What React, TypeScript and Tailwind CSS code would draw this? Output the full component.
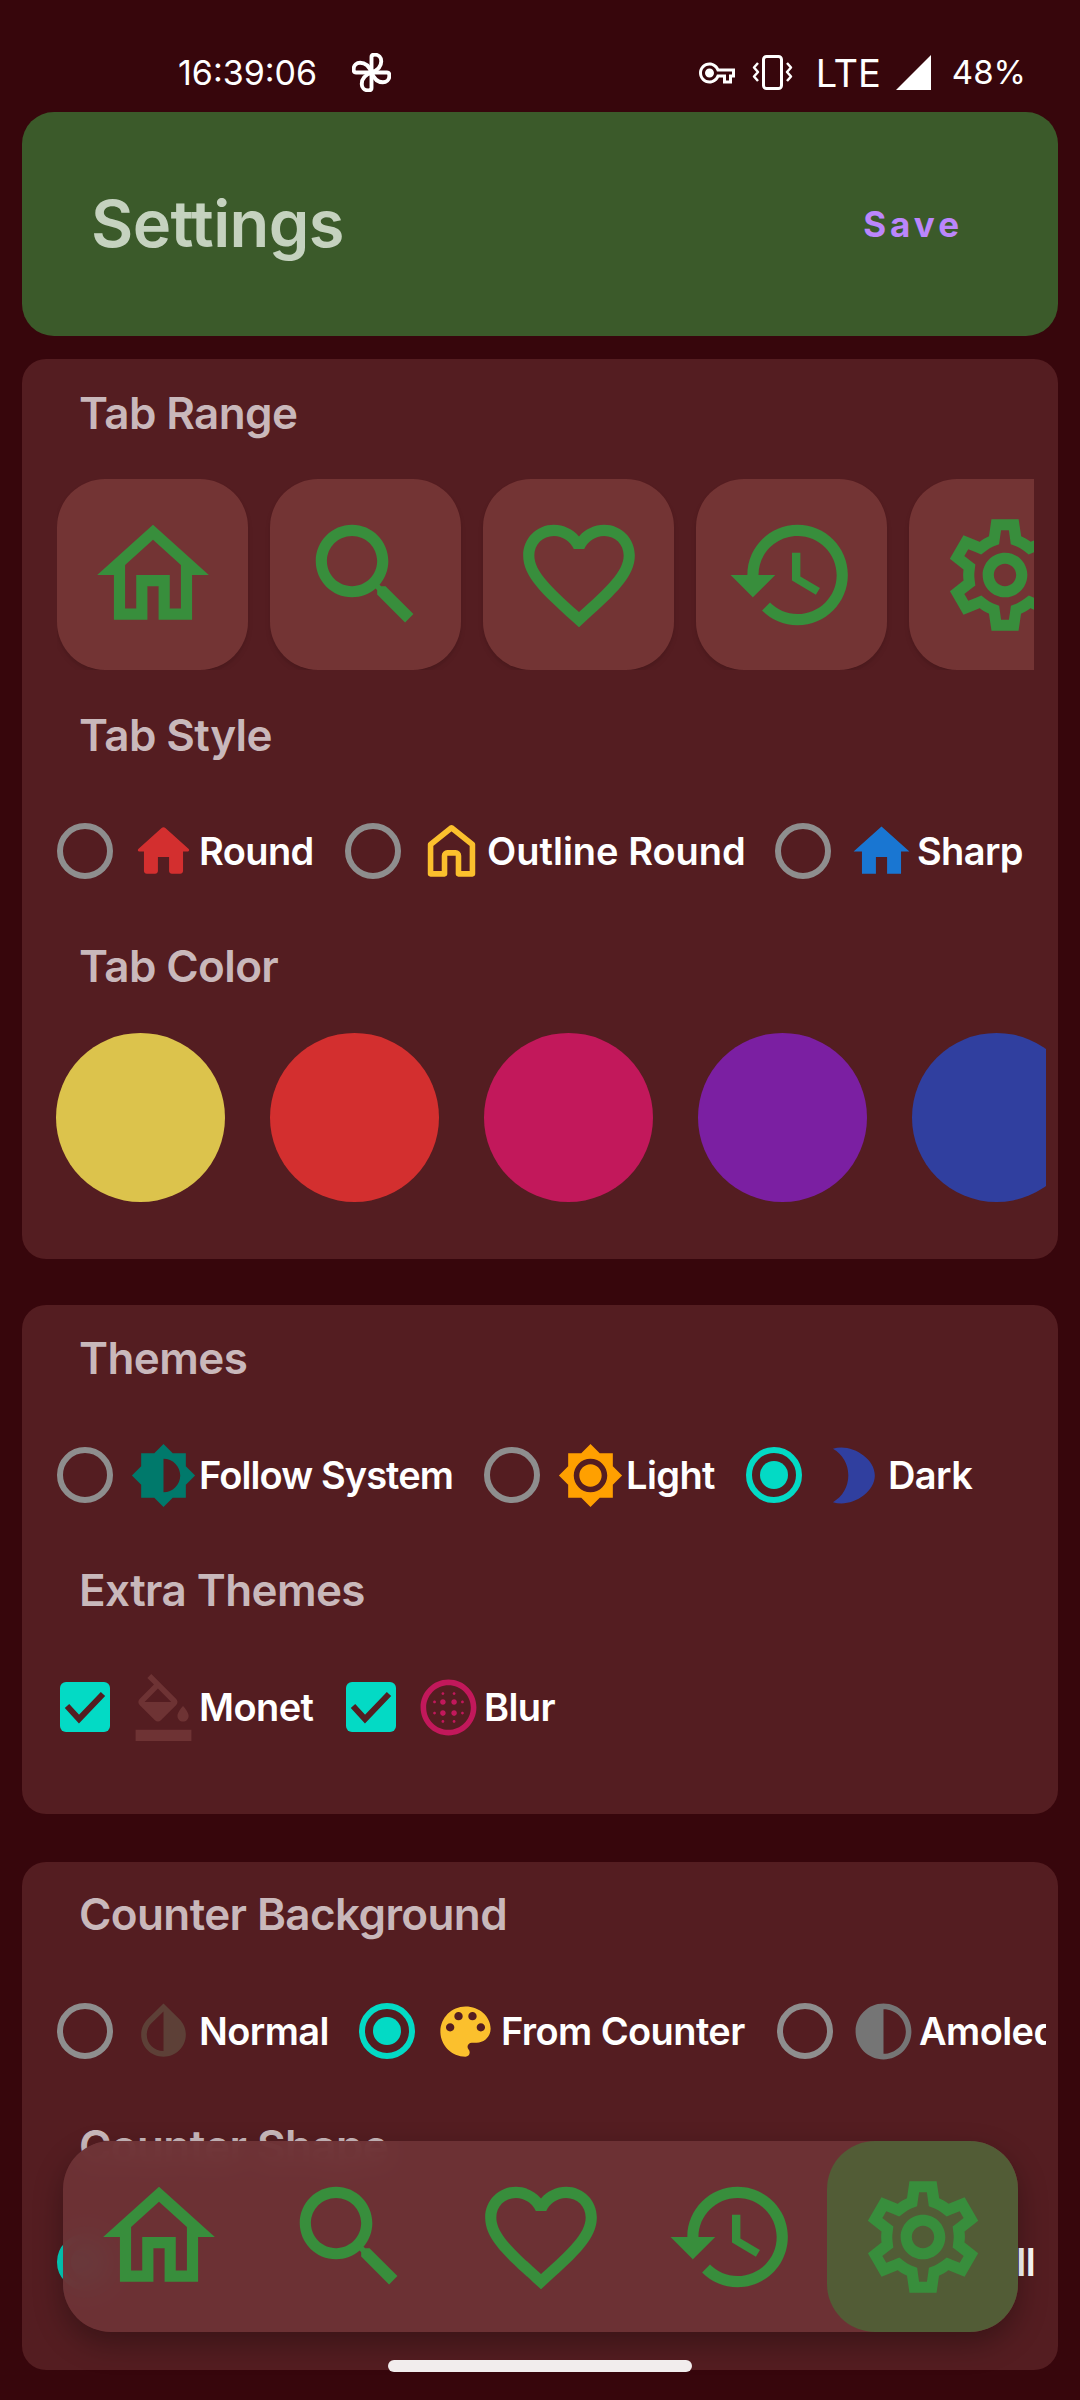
import React from 'react';

const ICONS = {
  home: 'M12 5.69l5 4.5V18h-2v-6H9v6H7v-7.81l5-4.5M12 3L2 12h3v8h6v-6h2v6h6v-8h3L12 3z',
  search:
    'M15.5 14h-.79l-.28-.27C15.41 12.59 16 11.11 16 9.5 16 5.91 13.09 3 9.5 3S3 5.91 3 9.5 5.91 16 9.5 16c1.61 0 3.09-.59 4.23-1.57l.27.28v.79l5 4.99L20.49 19l-4.99-5zm-6 0C7.01 14 5 11.99 5 9.5S7.01 5 9.5 5 14 7.01 14 9.5 11.99 14 9.5 14z',
  heart:
    'M16.5 3c-1.74 0-3.41.81-4.5 2.09C10.91 3.81 9.24 3 7.5 3 4.42 3 2 5.42 2 8.5c0 3.78 3.4 6.86 8.55 11.54L12 21.35l1.45-1.32C18.6 15.36 22 12.28 22 8.5 22 5.42 19.58 3 16.5 3zm-4.4 15.55l-.1.1-.1-.1C7.14 14.24 4 11.39 4 8.5 4 6.5 5.5 5 7.5 5c1.54 0 3.04.99 3.57 2.36h1.87C13.46 5.99 14.96 5 16.5 5c2 0 3.5 1.5 3.5 3.5 0 2.89-3.14 5.74-7.9 10.05z',
  history:
    'M13 3c-4.97 0-9 4.03-9 9H1l3.89 3.89.07.14L9 12H6c0-3.87 3.13-7 7-7s7 3.13 7 7-3.13 7-7 7c-1.93 0-3.68-.79-4.94-2.06l-1.42 1.42C8.27 19.99 10.51 21 13 21c4.97 0 9-4.03 9-9s-4.03-9-9-9zm-1 5v5l4.28 2.54.72-1.21-3.5-2.08V8H12z',
  gear:
    'M19.44 12.99l-.01.02c.04-.33.08-.67.08-1.01 0-.34-.03-.66-.07-.99l.01.02 2.44-1.92-2.43-4.22-2.87 1.16.01.01c-.52-.4-1.09-.74-1.71-1h.01L14.44 2H9.57l-.44 3.07h.01c-.62.26-1.19.6-1.71 1l.01-.01-2.88-1.17-2.44 4.22 2.44 1.92.01-.02c-.04.33-.07.65-.07.99 0 .34.03.68.08 1.01l-.01-.02-2.43 1.91 2.43 4.2 2.88-1.15-.02-.04c.53.41 1.1.75 1.73 1.01h-.03L9.58 22h4.85l.44-3.07h-.01c.62-.26 1.2-.6 1.73-1.01l-.02.04 2.88 1.15 2.43-4.2-2.44-1.92zM17.45 11.27c.04.31.05.52.05.73 0 .21-.02.43-.05.73l-.14 1.13.89.7 1.08.84-.7 1.21-1.27-.51-1.04-.42-.9.68c-.43.32-.84.56-1.25.73l-1.06.43-.16 1.13-.2 1.35h-1.4l-.19-1.35-.16-1.13-1.06-.43c-.43-.18-.83-.41-1.23-.71l-.91-.7-1.06.43-1.27.51-.7-1.21 1.08-.84.89-.7-.14-1.13c-.03-.31-.05-.54-.05-.74s.02-.43.05-.73l.14-1.13-.89-.7-1.08-.84.7-1.21 1.27.51 1.04.42.9-.68c.43-.32.84-.56 1.25-.73l1.06-.43.16-1.13.2-1.35h1.39l.19 1.35.16 1.13 1.06.43c.43.18.83.41 1.23.71l.91.7 1.06-.43 1.27-.51.7 1.21-1.07.85-.89.7.14 1.13zM12 8c-2.21 0-4 1.79-4 4s1.79 4 4 4 4-1.79 4-4-1.79-4-4-4zm0 6c-1.1 0-2-.9-2-2s.9-2 2-2 2 .9 2 2-.9 2-2 2z',
  homeRound:
    'M10 19v-5h4v5c0 .55.45 1 1 1h3c.55 0 1-.45 1-1v-7h1.7c.46 0 .68-.57.33-.87L12.67 3.6c-.38-.34-.96-.34-1.34 0l-8.36 7.53c-.34.3-.13.87.33.87H5v7c0 .55.45 1 1 1h3c.55 0 1-.45 1-1z',
  homeSharp: 'M10 20v-6h4v6h5v-8h3L12 3 2 12h3v8z',
  system:
    'M20 15.31L23.31 12 20 8.69V4h-4.69L12 .69 8.69 4H4v4.69L.69 12 4 15.31V20h4.69L12 23.31 15.31 20H20v-4.69zM12 18V6c3.31 0 6 2.69 6 6s-2.69 6-6 6z',
  light:
    'M20 8.69V4h-4.69L12 .69 8.69 4H4v4.69L.69 12 4 15.31V20h4.69L12 23.31 15.31 20H20v-4.69L23.31 12 20 8.69zM12 18c-3.31 0-6-2.69-6-6s2.69-6 6-6 6 2.69 6 6-2.69 6-6 6zm0-10c-2.21 0-4 1.79-4 4s1.79 4 4 4 4-1.79 4-4-1.79-4-4-4z',
  moon: 'M8 2c-1.05 0-2.05.16-3 .46C8.500 4.500 10.500 8 10.500 12c0 4-2 7.500-5.500 9.540.95.3 1.95.46 3 .46 5.520 0 12-4.480 12-10S13.520 2 8 2z',
  monet:
    'M16.56 8.94L7.62 0 6.21 1.41l2.38 2.38-5.15 5.15c-.59.59-.59 1.54 0 2.12l5.5 5.5c.29.29.68.44 1.06.44s.77-.15 1.06-.44l5.5-5.5c.59-.58.59-1.53 0-2.12zM5.21 10L10 5.21 14.79 10H5.21zM19 11.5s-2 2.17-2 3.5c0 1.1.9 2 2 2s2-.9 2-2c0-1.33-2-3.5-2-3.5zM2 20h20v4H2v-4z',
  blur:
    'M10 9c-.55 0-1 .45-1 1s.45 1 1 1 1-.45 1-1-.45-1-1-1zm0 4c-.55 0-1 .45-1 1s.45 1 1 1 1-.45 1-1-.45-1-1-1zM7 9.5c-.28 0-.5.22-.5.5s.22.5.5.5.5-.22.5-.5-.22-.5-.5-.5zm3 7c-.28 0-.5.22-.5.5s.22.5.5.5.5-.22.5-.5-.22-.5-.5-.5zm-3-3c-.28 0-.5.22-.5.5s.22.5.5.5.5-.22.5-.5-.22-.5-.5-.5zm3-6c.28 0 .5-.22.5-.5s-.22-.5-.5-.5-.5.22-.5.5.22.5.5.5zM14 9c-.55 0-1 .45-1 1s.45 1 1 1 1-.45 1-1-.45-1-1-1zm0-1.5c.28 0 .5-.22.5-.5s-.22-.5-.5-.5-.5.22-.5.5.22.5.5.5zm3 6c-.28 0-.5.22-.5.5s.22.5.5.5.5-.22.5-.5-.22-.5-.5-.5zm0-4c-.28 0-.5.22-.5.5s.22.5.5.5.5-.22.5-.5-.22-.5-.5-.5zM12 2C6.48 2 2 6.48 2 12s4.48 10 10 10 10-4.48 10-10S17.52 2 12 2zm0 18c-4.42 0-8-3.58-8-8s3.58-8 8-8 8 3.58 8 8-3.58 8-8 8zm2-3.5c-.28 0-.5.22-.5.5s.22.5.5.5.5-.22.5-.5-.22-.5-.5-.5zm0-3.5c-.55 0-1 .45-1 1s.45 1 1 1 1-.45 1-1-.45-1-1-1z',
  invert:
    'M12 4.81V19c-3.31 0-6-2.63-6-5.87 0-1.56.62-3.03 1.75-4.14L12 4.81M6.35 7.56C4.9 8.99 4 10.96 4 13.13 4 17.48 7.58 21 12 21s8-3.52 8-7.87c0-2.17-.9-4.14-2.35-5.57L12 2 6.35 7.56z',
  palette:
    'M12 3c-4.97 0-9 4.03-9 9s4.03 9 9 9c.83 0 1.5-.67 1.5-1.5 0-.39-.15-.74-.39-1.01-.23-.26-.38-.61-.38-.99 0-.83.67-1.5 1.5-1.5H16c2.76 0 5-2.24 5-5 0-4.42-4.03-8-9-8zm-5.5 9c-.83 0-1.5-.67-1.5-1.5S5.67 9 6.5 9 8 9.67 8 10.5 7.33 12 6.5 12zm3-4C8.67 8 8 7.33 8 6.5S8.67 5 9.5 5s1.5.67 1.5 1.5S10.33 8 9.5 8zm5 0c-.83 0-1.5-.67-1.5-1.5S13.67 5 14.5 5s1.5.67 1.5 1.5S15.33 8 14.5 8zm3 4c-.83 0-1.5-.67-1.5-1.5S16.67 9 17.5 9s1.5.67 1.5 1.5-.67 1.5-1.5 1.5z',
  contrast: 'M12 2C6.48 2 2 6.48 2 12s4.48 10 10 10 10-4.48 10-10S17.52 2 12 2zm0 18V4c4.41 0 8 3.59 8 8s-3.59 8-8 8z',
  key: 'M22 19h-6v-4h-2.68c-1.14 2.42-3.6 4-6.32 4-3.86 0-7-3.14-7-7s3.14-7 7-7c2.72 0 5.17 1.58 6.32 4H24v6h-2v4zm-4-2h2v-4h2v-2H11.94l-.23-.67C11.01 8.34 9.11 7 7 7c-2.76 0-5 2.24-5 5s2.24 5 5 5c2.11 0 4.01-1.34 4.71-3.33l.23-.67H18v4zM7 15c-1.65 0-3-1.35-3-3s1.35-3 3-3 3 1.35 3 3-1.35 3-3 3z',
};

const Icon = ({ d, className }: { d: string; className: string }) => (
  <svg viewBox="0 0 24 24" fill="currentColor" fillRule="evenodd" className={className}>
    <path d={d} />
  </svg>
);

const OutlineRoundHome = () => (
  <svg viewBox="0 0 24 24" fill="none" stroke="#fbc02d" strokeWidth={2} strokeLinejoin="round" className="w-[67px] h-[67px] shrink-0">
    <path d="M4.5 20V9.5L12 3.5l7.5 6V20h-5v-6.5a1 1 0 0 0-1-1h-3a1 1 0 0 0-1 1V20z" />
  </svg>
);

const FAN_PETAL = 'M12 12V2.500c0-1 .8-1.500 2-1.500 2.500 0 4 2 4 4 0 3-2 5.500-6 7z';

const Fan = () => (
  <svg viewBox="0 0 24 24" fill="none" stroke="#fff" strokeWidth={2.4} strokeLinejoin="round" className="w-[39px] h-[39px] ml-[35px]">
    {[0, 90, 180, 270].map((deg) => (
      <path key={deg} d={FAN_PETAL} transform={`rotate(${deg} 12 12)`} />
    ))}
  </svg>
);

const Vibrate = () => (
  <svg viewBox="0 0 41 35" fill="none" stroke="#fff" strokeWidth={3} strokeLinejoin="round" className="w-[41px] h-[35px] ml-[17px]">
    <rect x="11.500" y="1.500" width="18" height="32" rx="3" />
    <path d="M6 8l-4 4.500 4 4.500-4 4.500 4 4.500" strokeWidth={2.500} />
    <path d="M35 8l4 4.500-4 4.500 4 4.500-4 4.500" strokeWidth={2.500} />
  </svg>
);

const Heading = ({ children, className = '' }: { children: React.ReactNode; className?: string }) => (
  <h3 className={`h-[54px] pl-[22px] text-[44px] leading-[54px] font-semibold text-[#c9b8bb] tracking-[-0.6px] whitespace-nowrap ${className}`}>{children}</h3>
);

const Radio = ({ checked }: { checked?: boolean }) => (
  <span className={`flex w-[56px] h-[56px] shrink-0 items-center justify-center rounded-full border-[6px] ${checked ? 'border-[#03dac5]' : 'border-[#8e8e8e]'}`}>
    {checked && <span className="w-[28px] h-[28px] rounded-full bg-[#03dac5]" />}
  </span>
);

const Check = () => (
  <span className="flex w-[56px] h-[56px] shrink-0 items-center justify-center">
    <svg viewBox="0 0 50 50" className="w-[50px] h-[50px]">
      <rect width="50" height="50" rx="6" fill="#03dac5" />
      <path d="M7 24l12 13L43 12" fill="none" stroke="#541d21" strokeWidth="6" />
    </svg>
  </span>
);

const Label = ({ children, className = 'tracking-[-0.6px]' }: { children: React.ReactNode; className?: string }) => (
  <span className={`block text-[38px] leading-[68px] font-semibold text-white whitespace-nowrap ${className}`}>{children}</span>
);

type OptionProps = {
  control: React.ReactNode;
  icon: React.ReactNode;
  label: string;
  labelClass: string;
  iconGap?: string;
};

const Option = ({ control, icon, label, labelClass, iconGap = 'ml-[17px]' }: OptionProps) => (
  <div className="flex items-center shrink-0">
    {control}
    <span className={iconGap}>{icon}</span>
    <span className="ml-[2px]">
      <Label className={labelClass}>{label}</Label>
    </span>
  </div>
);

const small = 'w-[67px] h-[67px] shrink-0';

const TABS = [ICONS.home, ICONS.search, ICONS.heart, ICONS.history, ICONS.gear];
const SWATCHES = ['bg-[#dcc34c]', 'bg-[#d32f2f]', 'bg-[#c2185b]', 'bg-[#7b1fa2]', 'bg-[#303f9f]'];

export default function App() {
  return (
    <div className="relative h-[2400px] w-[1080px] overflow-hidden bg-[#37060c] font-['Inter',sans-serif]">
      {/* status bar */}
      <div className="flex h-[112px] items-center pl-[178px] pr-[54px] pt-[36px] pb-[3px] text-white text-[34px]">
        <span className="font-normal">16:39:06</span>
        <Fan />
        <div className="ml-auto flex items-center">
          <Icon d={ICONS.key} className="w-[36px] h-[36px]" />
          <Vibrate />
          <span className="ml-[23px] text-[38px] leading-none">LTE</span>
          <svg viewBox="0 0 35 35" className="ml-[15px] w-[35px] h-[35px]">
            <path d="M35 0v35H0z" fill="#fff" />
          </svg>
          <span className="ml-[21px] text-[33px]">48%</span>
        </div>
      </div>

      <header className="mx-[22px] flex h-[224px] items-center justify-between rounded-[32px] bg-[#3b5a2a] pl-[69px] pr-[95px]">
        <h1 className="text-[65px] font-semibold text-[#c5d2bf] tracking-[-0.6px]">Settings</h1>
        <span className="text-[35px] font-bold tracking-[4px] text-[#bb86fc]">Save</span>
      </header>

      <section className="mx-[22px] mt-[23px] rounded-[24px] bg-[#541d21] pl-[35px] pt-[27px] pb-[57px]">
        <Heading>Tab Range</Heading>
        <div className="mt-[39px] flex w-[977px] gap-[22px] overflow-hidden">
          {TABS.map((d) => (
            <div key={d} className="flex h-[191px] w-[191px] shrink-0 items-center justify-center rounded-[48px] bg-[#733434] text-[#388e3c] shadow-md">
              <Icon d={d} className="w-[134px] h-[134px]" />
            </div>
          ))}
        </div>
        <Heading className="mt-[38px]">Tab Style</Heading>
        <div className="mt-[55px] flex h-[68px] items-center gap-[31px]">
          <Option control={<Radio />} icon={<Icon d={ICONS.homeRound} className={`${small} text-[#d32f2f]`} />} label="Round" labelClass="w-[115px] tracking-[-0.6px]" />
          <Option control={<Radio />} icon={<OutlineRoundHome />} label="Outline Round" labelClass="w-[257px] tracking-[0px]" />
          <Option control={<Radio />} icon={<Icon d={ICONS.homeSharp} className={`${small} text-[#1976d2]`} />} label="Sharp" labelClass="w-[105px] tracking-[-0.6px]" />
        </div>
        <Heading className="mt-[54px]">Tab Color</Heading>
        <div className="mt-[40px] -ml-px flex w-[990px] gap-[45px] overflow-hidden">
          {SWATCHES.map((c) => (
            <div key={c} className={`h-[169px] w-[169px] shrink-0 rounded-full ${c}`} />
          ))}
        </div>
      </section>

      <section className="mx-[22px] mt-[46px] rounded-[24px] bg-[#541d21] pl-[35px] pt-[26px] pb-[73px]">
        <Heading>Themes</Heading>
        <div className="mt-[56px] flex h-[68px] items-center gap-[31px]">
          <Option control={<Radio />} icon={<Icon d={ICONS.system} className={`${small} text-[#00796b]`} />} label="Follow System" labelClass="w-[254px] tracking-[-0.9px]" />
          <Option control={<Radio />} icon={<Icon d={ICONS.light} className={`${small} text-[#ffa000]`} />} label="Light" labelClass="w-[89px] tracking-[-0.6px]" />
          <Option control={<Radio checked />} icon={<Icon d={ICONS.moon} className={`${small} text-[#303f9f]`} />} label="Dark" labelClass="w-[88px] tracking-[-0.6px]" />
        </div>
        <Heading className="mt-[54px]">Extra Themes</Heading>
        <div className="mt-[56px] flex h-[68px] items-center gap-[31px]">
          <Option control={<Check />} icon={<Icon d={ICONS.monet} className={`${small} text-[#6e3334]`} />} label="Monet" labelClass="w-[113px] tracking-[-0.6px]" />
          <Option control={<Check />} iconGap="ml-[16px]" icon={<Icon d={ICONS.blur} className={`${small} text-[#c2185b]`} />} label="Blur" labelClass="w-[72px] tracking-[-0.6px]" />
        </div>
      </section>

      <section className="mx-[22px] mt-[48px] rounded-[24px] bg-[#541d21] pl-[35px] pt-[25px] pb-[74px]">
        <Heading>Counter Background</Heading>
        <div className="mt-[56px] flex h-[68px] w-[989px] items-center gap-[31px] overflow-hidden">
          <Option control={<Radio />} icon={<Icon d={ICONS.invert} className={`${small} text-[#5d4037]`} />} label="Normal" labelClass="w-[129px] tracking-[-0.6px]" />
          <Option control={<Radio checked />} icon={<Icon d={ICONS.palette} className={`${small} text-[#fbc02d]`} />} label="From Counter" labelClass="w-[245px] tracking-[-0.6px]" />
          <Option control={<Radio />} icon={<Icon d={ICONS.contrast} className={`${small} text-[#757575]`} />} label="Amoled" labelClass="w-[150px] tracking-[-0.6px]" />
        </div>
        <Heading className="mt-[54px]">Counter Shape</Heading>
        <div className="mt-[55px] flex h-[68px] w-[978px] items-center justify-between">
          <Radio checked />
          <Label>Full</Label>
        </div>
      </section>

      {/* floating nav */}
      <nav className="absolute left-[63px] top-[2141px] flex h-[191px] w-[955px] rounded-[48px] bg-[#6e3336]/95 shadow-[0_12px_30px_rgba(0,0,0,0.3)] backdrop-blur-md">
        {TABS.map((d, i) => (
          <div key={d} className={`flex h-[191px] w-[191px] items-center justify-center rounded-[48px] text-[#388e3c] ${i === 4 ? 'bg-[#525c36]' : ''}`}>
            <Icon d={d} className="w-[134px] h-[134px]" />
          </div>
        ))}
      </nav>

      <div className="absolute left-[388px] top-[2360px] h-[12px] w-[304px] rounded-full bg-[#f1eded]" />
    </div>
  );
}
